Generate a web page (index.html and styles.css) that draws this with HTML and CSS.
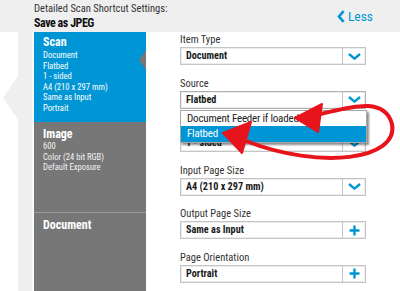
FILE: index.html
```html
<!DOCTYPE html>
<html>
<head>
<meta charset="utf-8">
<link rel="stylesheet" href="styles.css">
</head>
<body>
<div class="page">
  <header class="top">
    <div class="titles">
      <div class="subtitle">Detailed Scan Shortcut Settings:</div>
      <div class="title">Save as JPEG</div>
    </div>
    <a class="less"><svg class="less-ico" width="8" height="13" viewBox="0 0 8 13"><path d="M6.6 1.2 L2 6.5 L6.6 11.8" fill="none" stroke="#0096d6" stroke-width="2.6"/></svg>Less</a>
  </header>
  <div class="main">
    <div class="gutter">
      <svg class="gutter-art" width="34" height="259" viewBox="0 0 34 259"><rect x="18" y="0" width="14.5" height="259" fill="#efefef"/><polygon points="18.5,43 3,66 18.5,88" fill="#efefef"/></svg>
    </div>
    <nav class="sidebar">
      <div class="sect scan">
        <div class="sect-title">Scan</div>
        <div class="sect-line">Document</div>
        <div class="sect-line">Flatbed</div>
        <div class="sect-line">1 - sided</div>
        <div class="sect-line">A4 (210 x 297 mm)</div>
        <div class="sect-line">Same as Input</div>
        <div class="sect-line">Portrait</div>
      </div>
      <div class="sect image">
        <div class="sect-title">Image</div>
        <div class="sect-line">600</div>
        <div class="sect-line">Color (24 bit RGB)</div>
        <div class="sect-line">Default Exposure</div>
      </div>
      <div class="sect doc">
        <div class="sect-title">Document</div>
      </div>
    </nav>
    <div class="form">
      <div class="group">
        <div class="label">Item Type</div>
        <div class="field"><span class="val">Document</span><span class="btn"><svg width="13" height="7" viewBox="0 0 13 7"><path d="M1 1 L6.5 5.6 L12 1" fill="none" stroke="#0096d6" stroke-width="2.4"/></svg></span></div>
      </div>
      <div class="group">
        <div class="label">Source</div>
        <div class="field focus"><span class="val">Flatbed</span><span class="btn"><svg width="13" height="7" viewBox="0 0 13 7"><path d="M1 1 L6.5 5.6 L12 1" fill="none" stroke="#0096d6" stroke-width="2.4"/></svg></span></div>
      </div>
      <div class="group">
        <div class="label">Sides</div>
        <div class="field"><span class="val">1 - sided</span><span class="btn"><svg width="13" height="7" viewBox="0 0 13 7"><path d="M1 1 L6.5 5.6 L12 1" fill="none" stroke="#0096d6" stroke-width="2.4"/></svg></span></div>
      </div>
      <div class="group">
        <div class="label">Input Page Size</div>
        <div class="field"><span class="val">A4 (210 x 297 mm)</span><span class="btn"><svg width="13" height="7" viewBox="0 0 13 7"><path d="M1 1 L6.5 5.6 L12 1" fill="none" stroke="#0096d6" stroke-width="2.4"/></svg></span></div>
      </div>
      <div class="group">
        <div class="label">Output Page Size</div>
        <div class="field"><span class="val">Same as Input</span><span class="btn"><svg width="11" height="11" viewBox="0 0 11 11"><path d="M5.5 0.5 V10.5 M0.5 5.5 H10.5" fill="none" stroke="#0096d6" stroke-width="2.4"/></svg></span></div>
      </div>
      <div class="group">
        <div class="label">Page Orientation</div>
        <div class="field"><span class="val">Portrait</span><span class="btn"><svg width="11" height="11" viewBox="0 0 11 11"><path d="M5.5 0.5 V10.5 M0.5 5.5 H10.5" fill="none" stroke="#0096d6" stroke-width="2.4"/></svg></span></div>
      </div>
      <div class="dropdown">
        <div class="opt">Document Feeder if loaded</div>
        <div class="opt sel">Flatbed</div>
      </div>
    </div>
  </div>
  <svg class="annot" width="400" height="291" viewBox="0 0 400 291">
    <path d="M316 115 C 345 109, 384 94, 392 124 C 399 160, 320 170, 246 141" fill="none" stroke="#e8141c" stroke-width="4" stroke-linecap="round"/>
    <polygon points="295,118 322,104 318,132" fill="#e8141c" stroke="#e8141c" stroke-width="2" stroke-linejoin="round"/>
    <polygon points="223,133 251,122 242,153" fill="#e8141c" stroke="#e8141c" stroke-width="2" stroke-linejoin="round"/>
  </svg>
</div>
</body>
</html>
```

FILE: styles.css
```css
* { box-sizing: border-box; }
html, body { margin: 0; padding: 0; }
body {
  width: 400px;
  height: 291px;
  overflow: hidden;
  background: #ffffff;
  font-family: Roboto, "Liberation Sans", sans-serif;
  font-stretch: 75%;
  color: #222;
}
.page {
  position: relative;
  width: 400px;
  height: 291px;
  overflow: hidden;
}
.top {
  height: 32px;
  background: #efefef;
  display: flex;
  align-items: center;
  justify-content: space-between;
  padding: 0 27px 0 34px;
}
.titles { align-self: flex-start; padding-top: 2px; }
.subtitle { font-size: 10.5px; line-height: 13px; color: #333; }
.title { font-size: 12px; line-height: 17px; font-weight: bold; letter-spacing: -0.45px; color: #111; }
.less {
  display: flex;
  align-items: center;
  gap: 3px;
  color: #0096d6;
  font-size: 13.5px;
  line-height: 16px;
}
.less-ico { display: block; }
.main {
  display: flex;
  height: 259px;
}
.gutter { width: 34px; flex: none; }
.gutter-art { display: block; }
.sidebar {
  width: 112px;
  flex: none;
  display: flex;
  flex-direction: column;
  background: #777777;
}
.sect { padding-left: 9px; color: #f2f2f2; }
.sect-title { font-size: 12px; font-weight: bold; line-height: 13px; color: #fff; }
.sect-line { font-size: 8.6px; line-height: 10.6px; }
.scan {
  height: 90px;
  padding-top: 4px;
  background: #0096d6;
  color: #ffffff;
  clip-path: polygon(0 0, 100% 0, 100% 18px, calc(100% - 7px) 28px, 100% 38px, 100% 100%, 0 100%);
}
.scan .sect-title { margin-bottom: 1px; }
.image {
  height: 91px;
  padding-top: 6px;
  border-bottom: 1px solid #989898;
}
.doc { flex: 1; padding-top: 6px; }
.form {
  position: relative;
  flex: 1;
  padding-left: 34px;
  display: flex;
  flex-direction: column;
  gap: 10.6px;
}
.group { width: 186px; }
.label { font-size: 10.5px; line-height: 15px; color: #333; }
.field {
  height: 18px;
  border: 1px solid #c4c4c4;
  box-shadow: inset 0 0 0 1px #ececec;
  display: flex;
  align-items: stretch;
  background: #fff;
}
.field.focus { border-color: #b0b0b0; }
.val {
  flex: 1;
  padding-left: 5px;
  font-size: 10.2px;
  font-weight: bold;
  line-height: 16px;
  color: #1a1a1a;
}
.btn {
  width: 23px;
  border-left: 1px solid #c4c4c4;
  display: flex;
  align-items: center;
  justify-content: center;
}
.btn svg { display: block; }
.dropdown {
  position: absolute;
  top: 78px;
  left: 34px;
  width: 187px;
  background: #fff;
  border: 1px solid #a8a8a8;
  box-shadow: 2px 2px 2px rgba(0, 0, 0, 0.45);
}
.opt {
  height: 15px;
  padding-left: 6px;
  font-size: 11px;
  letter-spacing: -0.2px;
  line-height: 15px;
  color: #222;
}
.opt.sel {
  height: 16px;
  line-height: 16px;
  background: #0096d6;
  color: #fff;
}
.annot {
  position: absolute;
  top: 0;
  left: 0;
  pointer-events: none;
}
```
